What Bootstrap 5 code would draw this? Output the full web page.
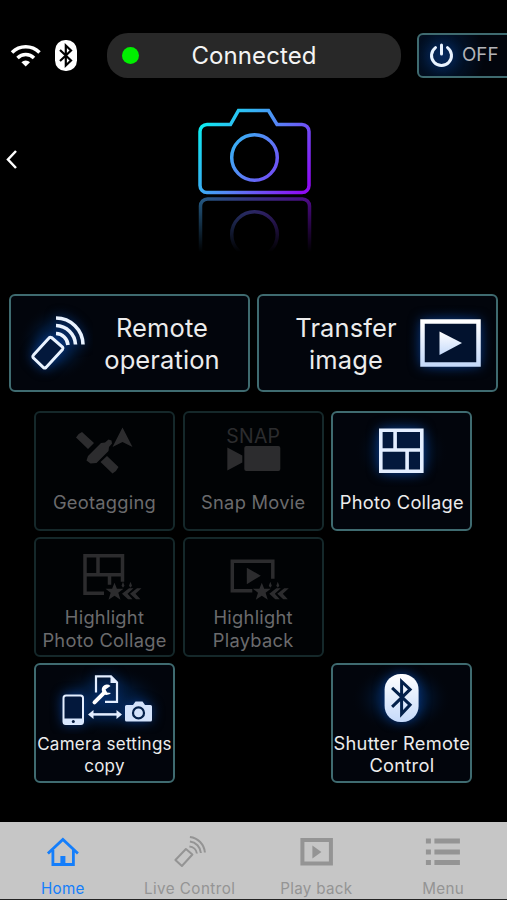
<!DOCTYPE html>
<html lang="en">
<head>
<meta charset="utf-8">
<meta name="viewport" content="width=device-width, initial-scale=1">
<title>Camera remote</title>
<link href="https://cdn.jsdelivr.net/npm/bootstrap@5.3.0/dist/css/bootstrap.min.css" rel="stylesheet">
<style>
  body { background: #000; color: #f2f2f2; font-family: Inter, "Liberation Sans", sans-serif; }
  svg { display: block; flex: none; }
  .app { height: 900px; overflow: hidden; }
  .topbar { padding-top: 33px; height: 78px; }
  .status-icons { width: 107px; }
  .status-pill { width: 294px; height: 45px; border-radius: 21px; background: #282828; color: #f4f4f4; font-size: 24px; letter-spacing: .1px; }
  .dot { width: 17px; height: 17px; background: #00f000; margin-left: 15px; }
  .pill-end { width: 32px; }
  .panel { border: 2px solid #3f6b70; border-radius: 6px; background: #02050c; color: #ececec; padding: 0; overflow: hidden; }
  .power { width: 100px; height: 45px; margin-left: 16px; background: radial-gradient(circle at 24px 20px, #03204a 0, #021126 22px, #02050c 42px); font-size: 18.8px; color: #b4b4b8; }
  .hero { height: 216px; }
  .actions { padding: 0 9px; gap: 7px; }
  .action { width: 241px; height: 98px; font-size: 25.5px; line-height: 32px; letter-spacing: .1px; }
  .action span { padding-top: 1px; }
  .remote-label { width: 138px; }
  .transfer-label { width: 120px; }
  .tiles { display: grid; grid-template-columns: repeat(3, 141px); grid-auto-rows: 119.700px; gap: 6.500px 7.700px; padding: 19px 0 0 34px; }
  .tile { font-size: 18.3px; line-height: 22.5px; letter-spacing: .27px; white-space: nowrap; }
  .tile.tight { line-height: 21.5px; }
  .tile.small-label { font-size: 17px; padding-top: 1px; }
  .tile.off { border-color: #15282a; background: #010305; color: #6b6b6d; }
  .tabs { height: 78px; margin-top: auto; background: #c6c6c6; border-bottom: 1px solid #222; }
  .tab { color: #949494; font-size: 15.2px; line-height: 19px; letter-spacing: .3px; text-decoration: none; }
  .tab svg { transform: translateX(-.5px); }
  .tab span { margin-right: 1px; }
  .tab .wide { letter-spacing: .45px; }
  .tab.current { color: #147efb; }
  .g1 { filter: drop-shadow(0 0 6px rgba(11, 80, 190, .6)); }
</style>
</head>
<body>
<svg width="0" height="0" class="position-absolute" aria-hidden="true">
  <defs>
    <linearGradient id="neon" gradientUnits="userSpaceOnUse" x1="206" y1="118" x2="305" y2="188">
      <stop offset="0" stop-color="#0cecf0"/><stop offset=".5" stop-color="#5686f6"/><stop offset="1" stop-color="#8e0cf4"/>
    </linearGradient>
    <linearGradient id="fadeDown" gradientUnits="userSpaceOnUse" x1="0" y1="195" x2="0" y2="252">
      <stop offset="0" stop-color="#fff" stop-opacity=".6"/><stop offset="1" stop-color="#fff" stop-opacity="0"/>
    </linearGradient>
    <linearGradient id="neonLow" gradientUnits="userSpaceOnUse" x1="200" y1="0" x2="309" y2="0">
      <stop offset="0" stop-color="#3f9fe8"/><stop offset=".5" stop-color="#6458e8"/><stop offset="1" stop-color="#8a12f0"/>
    </linearGradient>
    <linearGradient id="ice" x1="0" y1="0" x2="0" y2="1"><stop offset="0" stop-color="#fff"/><stop offset="1" stop-color="#c6dafa"/></linearGradient>
    <radialGradient id="halo"><stop offset="0" stop-color="#032454"/><stop offset=".5" stop-color="#021734" stop-opacity=".85"/><stop offset="1" stop-color="#02050c" stop-opacity="0"/></radialGradient>
    <mask id="mirror" maskUnits="userSpaceOnUse" x="190" y="195" width="130" height="60"><rect x="190" y="195" width="130" height="60" fill="url(#fadeDown)"/></mask>
    <g id="sparkle">
      <path d="M0-9 2.400-3H9L3.800 1 6 8 0 4-6 8-3.800 1-9-3h6.600z"/>
      <path d="M14.500-3.500h4.500l-6 5.500 5 5.500h-4.500l-6-5.500zM22.500-3.500h4.500l-6 5.500 5 5.500h-4.500l-6-5.500zM8.500-10l1.500 4-1.500 2-1.500-2zM16-10l1.500 4-1.500 2-1.500-2z"/>
    </g>
  </defs>
</svg>

<div class="app d-flex flex-column">
  <header class="topbar d-flex flex-nowrap">
    <div class="status-icons flex-shrink-0">
      <svg width="107" height="45" viewBox="0 33 107 45" fill="none" stroke="#fff" stroke-width="3.500">
        <path d="M12 52.500a19.500 19.500 0 0 1 27.500 0M17.500 58a11.700 11.700 0 0 1 16.500 0"/>
        <path d="M25.700 66.500l-4.300-4.300a6 6 0 0 1 8.600 0z" fill="#fff" stroke="none"/>
        <rect x="55" y="40" width="22" height="31" rx="10.500" fill="#fff" stroke="none"/>
        <path d="M60 50l11 10.500-5.200 5V45.500l5.200 5L60 61" stroke="#000" stroke-width="2.200"/>
      </svg>
    </div>
    <div class="status-pill d-flex align-items-center flex-shrink-0">
      <span class="dot rounded-circle"></span>
      <span class="flex-grow-1 text-center">Connected</span>
      <span class="pill-end"></span>
    </div>
    <button class="panel power d-flex align-items-center flex-shrink-0" type="button">
      <svg width="43" height="41" viewBox="419 35 43 41" fill="none" stroke="#e9f3ff" stroke-width="3" stroke-linecap="round" class="g1">
        <path d="M441.500 45v9"/><path d="M435.500 47.600a10 10 0 1 0 12 0"/>
      </svg>
      <span>OFF</span>
    </button>
  </header>

  <section class="hero">
    <svg width="507" height="216" viewBox="0 78 507 216" fill="none">
      <path d="M16 151l-8 8.500 8 8.500" stroke="#fff" stroke-width="2.500"/>
      <g stroke="url(#neon)" stroke-width="3.500">
        <path d="M207 124.500h23.500l8-14h30l8.500 14h25a7 7 0 0 1 7 7v54a7 7 0 0 1-7 7h-95a7 7 0 0 1-7-7v-54a7 7 0 0 1 7-7z"/>
        <circle cx="254.500" cy="157.500" r="22.800"/>
      </g>
      <g mask="url(#mirror)" stroke="url(#neonLow)" stroke-width="3.500">
        <path d="M200.500 270v-64a7 7 0 0 1 7-7h95a7 7 0 0 1 7 7v64"/>
        <circle cx="254.500" cy="234.500" r="22.800"/>
      </g>
    </svg>
  </section>

  <section class="actions d-flex">
    <button class="panel action d-flex align-items-center" type="button">
      <svg width="82" height="94" viewBox="11 296 82 94" fill="none">
        <ellipse cx="56" cy="343" rx="38" ry="38" fill="url(#halo)"/>
        <g class="g1" stroke="#eaf3ff" stroke-width="3"><path d="M51.500 337.500l11 9.500a2 2 0 0 1 0 2.500l-16.500 18a2 2 0 0 1-2.500 0L33.500 358a2 2 0 0 1 0-3l15.500-17a2 2 0 0 1 2.500-.5z" fill="#03183c"/>
        <path d="M56 333.500a12.500 12.500 0 0 1 12 11.500M56 325.500a20 20 0 0 1 19.500 19M56 318a27 27 0 0 1 27 26.500" stroke-width="3.600"/></g>
      </svg>
      <span class="remote-label text-center">Remote<br>operation</span>
    </button>
    <button class="panel action d-flex align-items-center justify-content-end" type="button">
      <span class="transfer-label text-center">Transfer<br>image</span>
      <svg width="90" height="94" viewBox="406 296 90 94">
        <ellipse cx="450" cy="343" rx="46" ry="38" fill="url(#halo)"/>
        <g class="g1"><rect x="422.500" y="321.500" width="56" height="43" fill="#02122e" stroke="url(#ice)" stroke-width="4.500"/>
        <path d="M439.500 331.500l22.500 11.500-22.500 12z" fill="url(#ice)"/></g>
      </svg>
    </button>
  </section>

  <section class="tiles">
    <button class="panel tile off d-flex flex-column align-items-center" type="button">
      <svg width="137" height="78" viewBox="36 413 137 78" fill="#2c2c2e">
        <path d="M82 432l12 11-6 6-12-11.500q2-4 6-5.500zM107 456l11.500 11q-2 4.500-6 6.500l-12-11.500zM88 456l13-13 4-.5 3.500-3 3 1 .5 3-3 3.500-.5 4-12 12-6 .5-4-3z"/>
        <path d="M122.500 427.500l10 19.500-10-5-10 5z"/>
      </svg><span>Geotagging</span>
    </button>
    <button class="panel tile off d-flex flex-column align-items-center" type="button">
      <svg width="137" height="78" viewBox="184.700 413 137 78" fill="#2c2c2e">
        <text x="226" y="442.500" font-size="19.500" textLength="54" lengthAdjust="spacingAndGlyphs">SNAP</text>
        <path d="M227 447.500l15 8v7l-15 8z"/><rect x="244" y="446" width="36" height="25" rx="2"/>
      </svg><span>Snap Movie</span>
    </button>
    <button class="panel tile d-flex flex-column align-items-center" type="button">
      <svg width="137" height="78" viewBox="333.400 413 137 78">
        <ellipse cx="402" cy="451" rx="46" ry="38" fill="url(#halo)"/>
        <g class="g1"><path d="M381.200 430.200h41v41h-41zM381 450h41.500M395.500 430v20M407.500 450v21" fill="#03183c" stroke="#e4eeff" stroke-width="3.600"/></g>
      </svg><span>Photo Collage</span>
    </button>

    <button class="panel tile off d-flex flex-column align-items-center" type="button">
      <svg width="137" height="67" viewBox="36 539.300 137 67" fill="none" stroke="#2c2c2e" stroke-width="3.500">
        <path d="M104 593.500H85v-37.500h37.500v26M84 575h39M98 556v19M109.500 575v10"/>
        <use href="#sparkle" x="114.500" y="592" fill="#2c2c2e" stroke="none"/>
      </svg><span>Highlight<br>Photo Collage</span>
    </button>
    <button class="panel tile off d-flex flex-column align-items-center" type="button">
      <svg width="137" height="67" viewBox="184.700 539.300 137 67" fill="none" stroke="#2c2c2e" stroke-width="3.500">
        <path d="M252 591h-20v-29.500h40.500v17.500"/><path d="M246.500 568l14 8-14 8.500z" fill="#2c2c2e" stroke="none"/>
        <use href="#sparkle" x="261.500" y="592" fill="#2c2c2e" stroke="none"/>
      </svg><span>Highlight<br>Playback</span>
    </button>
    <span></span>

    <button class="panel tile tight small-label d-flex flex-column align-items-center" type="button">
      <svg width="137" height="68" viewBox="36 665.600 137 68" fill="none">
        <ellipse cx="106" cy="700" rx="62" ry="36" fill="url(#halo)"/>
        <g class="g1">
          <rect x="63.500" y="695" width="19.500" height="28.500" rx="2.500" fill="#03183c" stroke="#e4eeff" stroke-width="2"/>
          <path d="M63.500 718h19.500v4a2 2 0 0 1-2 2h-15.500a2 2 0 0 1-2-2z" fill="#d8e6fd"/><circle cx="73.300" cy="721" r="1.500" fill="#03183c"/>
          <path d="M96 692v-16h15l6 6v19.500h-12" stroke="#e4eeff" stroke-width="2.200"/><path d="M110.500 675v7.500h7.500z" fill="#e4eeff"/>
          <path d="M94.500 702l10-10" stroke="#fff" stroke-width="4" stroke-linecap="round"/>
          <path d="M110.500 685.500a5.200 5.200 0 1 0 .5 7l-4-.5-1.500-3z" fill="#fff"/>
          <path d="M91 714h28" stroke="#e4eeff" stroke-width="2.500"/><path d="M88 714l5.500-4.500v9zM122 714l-5.500-4.500v9z" fill="#e4eeff"/>
          <path d="M126.500 704.500h6.500l2.500-3.500h7l2.500 3.500h5.500a1.500 1.500 0 0 1 1.500 1.500v13.500a1.500 1.500 0 0 1-1.500 1.500h-24a1.500 1.500 0 0 1-1.500-1.500V706a1.500 1.500 0 0 1 1.500-1.500z" fill="#d3e2fb"/>
          <circle cx="138.500" cy="712.500" r="5.500" stroke="#03204a" stroke-width="2.200"/>
        </g>
      </svg><span>Camera settings<br>copy</span>
    </button>
    <span></span>
    <button class="panel tile tight d-flex flex-column align-items-center" type="button">
      <svg width="137" height="68" viewBox="333.400 665.600 137 68" fill="none">
        <ellipse cx="402" cy="699" rx="50" ry="36" fill="url(#halo)"/>
        <rect x="385" y="674.500" width="34" height="48" rx="16" fill="url(#ice)" class="g1"/>
        <path d="M392.500 688.500l18 17-8.500 9V682l8.500 8-18 17.500" stroke="#03204a" stroke-width="3"/>
      </svg><span>Shutter Remote<br>Control</span>
    </button>
  </section>

  <nav class="tabs d-flex flex-shrink-0">
    <a class="tab current w-25 text-center" href="#">
      <svg class="w-100" height="57" viewBox="-63.400 822 126.750 57" fill="none" stroke="currentColor" stroke-width="2.800">
        <path d="M-15 853.500L0 839.500l15 14M-10 850v14.500h20.500V850"/><path d="M-2.500 856h5v9h-5z" fill="currentColor" stroke="none"/>
      </svg><span>Home</span>
    </a>
    <a class="tab w-25 text-center" href="#">
      <svg class="w-100" height="57" viewBox="-63.400 822 126.750 57" fill="none" stroke="currentColor" stroke-width="2">
        <path d="M-4 849l6.500 5.500L-8 866l-6.500-6z" stroke-linejoin="round"/><path d="M-.5 846.500a8 8 0 0 1 7.500 7M0 841.500a12.500 12.500 0 0 1 11 11.500M0 837a17 17 0 0 1 15 15.500"/>
      </svg><span class="wide">Live Control</span>
    </a>
    <a class="tab w-25 text-center" href="#">
      <svg class="w-100" height="57" viewBox="-63.400 822 126.750 57" fill="none" stroke="currentColor" stroke-width="4">
        <path d="M-14.500 840h28.500v23.500h-28.500z"/><path d="M-4.500 845.500l9 6.500-9 6.500z" fill="currentColor" stroke="none"/>
      </svg><span>Play back</span>
    </a>
    <a class="tab w-25 text-center" href="#">
      <svg class="w-100" height="57" viewBox="-63.400 822 126.750 57" fill="none" stroke="currentColor" stroke-width="5">
        <path d="M-8.500 841h25.500M-8.500 852h25.500M-8.500 862.500h25.500M-17 841h5M-17 852h5M-17 862.500h5"/>
      </svg><span>Menu</span>
    </a>
  </nav>
</div>
<script src="https://cdn.jsdelivr.net/npm/bootstrap@5.3.0/dist/js/bootstrap.bundle.min.js"></script>
</body>
</html>
